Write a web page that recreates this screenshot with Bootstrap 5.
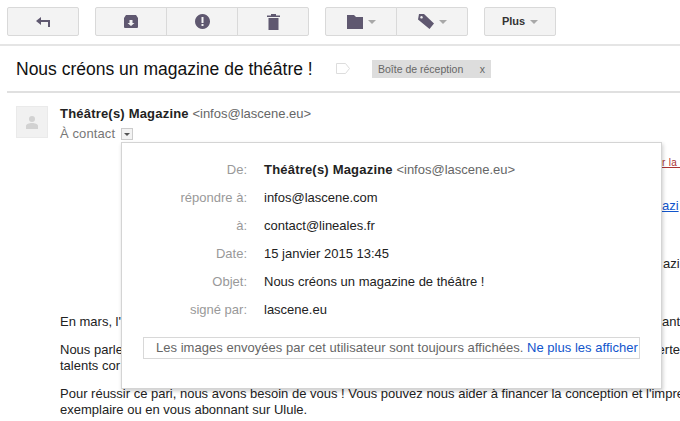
<!doctype html>
<html lang="fr">
  <head>
    <meta charset="utf-8">
    <title>Nous créons un magazine de théâtre !</title>
    <link href="https://cdn.jsdelivr.net/npm/bootstrap@5.3.3/dist/css/bootstrap.min.css" rel="stylesheet">
    <style>
      html, body { height: 421px; overflow: hidden; }
      body { font-family: "Liberation Sans", Arial, sans-serif; font-size: 13px; color: #222; background: #fff; line-height: 16px; position: relative; }
      .mail-toolbar { height: 46px; padding: 7px 7px 0; gap: 16px; border-bottom: 2px solid #e5e5e5; }
      .tb-btn { width: 72px; height: 29px; padding: 0; display: flex; align-items: center; justify-content: center; gap: 5px; background: #f3f3f3; border: 1px solid #d9d9d9; border-radius: 2px; color: #333; font-size: 11px; font-weight: 700; }
      .tb-btn svg { fill: #5f5870; display: block; }
      .tb-btn:hover { background: #f3f3f3; border-color: #d9d9d9; }
      .tb-caret { width: 0; height: 0; border: 4px solid transparent; border-top-color: #a8a8a8; border-bottom-width: 0; }
      .subject-row { height: 47px; margin-left: 7px; border-bottom: 2px solid #e0e0e0; padding-left: 9px; }
      .subject-row h1 { font-size: 17.5px; font-weight: 400; color: #111; margin: 0; line-height: 24px; width: 320px; }
      .mail-tag { background: #ddd; color: #666; font-size: 10.5px; height: 18px; line-height: 18px; width: 119px; margin-left: 22px; padding: 0 6px; }
      .sender-row { padding: 13px 0 0 16px; height: 72px; gap: 12px; }
      .sender-pic { width: 32px; height: 32px; background: #f1f1f1; border: 1px solid #eaeaea; }
      .sender-name { font-weight: 700; color: #222; letter-spacing: .2px; }
      .sender-mail { color: #666; }
      .to-line { color: #777; margin-top: 4px; letter-spacing: .1px; }
      .to-caret { width: 12px; height: 12px; border: 1px solid #ccc; background: #f3f3f3; margin-left: 6px; }
      .to-caret i { width: 0; height: 0; border: 3px solid transparent; border-top-color: #555; border-bottom-width: 0; }
      .mail-body { padding-left: 60px; white-space: nowrap; overflow: hidden; }
      .mail-gap-top { height: 149px; }
      .mail-gap { height: 12px; }
      .side-bits { position: absolute; left: 662px; top: 0; width: 18px; height: 300px; overflow: hidden; }
      .side-bits span { position: absolute; left: 0; white-space: nowrap; }
      .side-bits .ext-red { top: 155px; color: #a33; text-decoration: underline; font-size: 10px; letter-spacing: .3px; }
      .side-bits .ext-link { top: 198px; color: #15c; text-decoration: underline; }
      .side-bits .ext-plain { top: 256px; left: 1px; color: #222; }
      .detail-pop { position: absolute; left: 121px; top: 142px; width: 541px; height: 247px; background: #fff; border: 1px solid #d4d4d4; box-shadow: 1px 2px 4px rgba(0,0,0,.2); padding-top: 13px; }
      .detail-row { display: flex; height: 28px; align-items: center; }
      .detail-key { width: 125px; text-align: right; color: #999; margin-right: 17px; }
      .detail-notice { margin: 13px 0 0 21px; width: 497px; height: 22px; border: 1px solid #d8d8d8; color: #666; padding-left: 12px; line-height: 19px; white-space: nowrap; letter-spacing: .03px; }
      .detail-notice a { color: #15c; text-decoration: none; }
      .detail-pop b { letter-spacing: .2px; }
    </style>
  </head>
  <body>
    <div class="mail-toolbar d-flex">
      <button class="btn tb-btn"><svg width="14" height="10" viewBox="0 0 14 10"><path d="M5 0v3h9v7h-2V5H5v3L0 4z"/></svg></button>
      <div class="btn-group">
        <button class="btn tb-btn"><svg width="14" height="13" viewBox="0 0 14 13"><path d="M2 0h10l2 3v9a1 1 0 0 1-1 1H1a1 1 0 0 1-1-1V3zM5.500 5v3H3.500L7 11l3.500-3H8.500V5z" fill-rule="evenodd"/></svg></button>
        <button class="btn tb-btn"><svg width="15" height="15" viewBox="0 0 15 15"><path d="M7.500 0a7.500 7.500 0 1 0 .01 0zM6.500 3v6h2V3zM6.500 10v2h2v-2z" fill-rule="evenodd"/></svg></button>
        <button class="btn tb-btn"><svg width="13" height="16" viewBox="0 0 13 16"><path d="M4 0h5v1.500h4V3H0V1.500h4zM1.500 4h10v12h-10z"/></svg></button>
      </div>
      <div class="btn-group">
        <button class="btn tb-btn"><svg width="16" height="14" viewBox="0 0 16 14"><path d="M0 0h7l2 2h7v12H0z"/></svg><span class="tb-caret"></span></button>
        <button class="btn tb-btn"><svg width="16" height="15" viewBox="0 0 16 15"><path d="M1 0h5l10 9.500-4.500 5.500L0 5.500zM3.500 2a1.300 1.300 0 1 0 .01 0z" fill-rule="evenodd"/></svg><span class="tb-caret"></span></button>
      </div>
      <button class="btn tb-btn">Plus<span class="tb-caret"></span></button>
    </div>

    <div class="subject-row d-flex align-items-center">
      <h1>Nous créons un magazine de théâtre !</h1>
      <svg width="14" height="11" viewBox="0 0 14 11" class="flex-shrink-0"><path d="M.5.500h9l4 5-4 5h-9z" fill="#fff" stroke="#ddd"/></svg>
      <div class="mail-tag d-flex justify-content-between"><span>Boîte de réception</span><span>x</span></div>
    </div>

    <div class="sender-row d-flex">
      <div class="sender-pic d-flex align-items-center justify-content-center">
        <svg width="12" height="13" viewBox="0 0 12 13" fill="#d2d2d2"><circle cx="6" cy="3" r="3"/><path d="M0 13v-3c0-2 3-3 6-3s6 1 6 3v3z"/></svg>
      </div>
      <div>
        <div><span class="sender-name">Théâtre(s) Magazine</span> <span class="sender-mail">&lt;infos@lascene.eu&gt;</span></div>
        <div class="to-line d-flex align-items-center">À contact <span class="to-caret d-flex align-items-center justify-content-center"><i></i></span></div>
      </div>
    </div>

    <div class="mail-body">
      <div class="mail-gap-top"></div>
      <div class="d-flex justify-content-between"><span>En mars, l'</span><span>ant</span></div>
      <div class="mail-gap"></div>
      <div class="d-flex justify-content-between"><span>Nous parle</span><span>erte</span></div>
      <div>talents cor</div>
      <div class="mail-gap"></div>
      <div>Pour réussir ce pari, nous avons besoin de vous ! Vous pouvez nous aider à financer la conception et l'impre</div>
      <div>exemplaire ou en vous abonnant sur Ulule.</div>
    </div>

    <div class="side-bits">
      <span class="ext-red">r la v</span>
      <span class="ext-link">azi</span>
      <span class="ext-plain">azi</span>
    </div>

    <div class="detail-pop">
      <div class="detail-row"><div class="detail-key">De:</div><div><b>Théâtre(s) Magazine</b> <span class="sender-mail">&lt;infos@lascene.eu&gt;</span></div></div>
      <div class="detail-row"><div class="detail-key">répondre à:</div><div>infos@lascene.com</div></div>
      <div class="detail-row"><div class="detail-key">à:</div><div>contact@lineales.fr</div></div>
      <div class="detail-row"><div class="detail-key">Date:</div><div>15 janvier 2015 13:45</div></div>
      <div class="detail-row"><div class="detail-key">Objet:</div><div>Nous créons un magazine de théâtre !</div></div>
      <div class="detail-row"><div class="detail-key">signé par:</div><div>lascene.eu</div></div>
      <div class="detail-notice">Les images envoyées par cet utilisateur sont toujours affichées. <a href="#">Ne plus les afficher</a></div>
    </div>

    <script src="https://cdn.jsdelivr.net/npm/bootstrap@5.3.3/dist/js/bootstrap.bundle.min.js"></script>
  </body>
</html>
